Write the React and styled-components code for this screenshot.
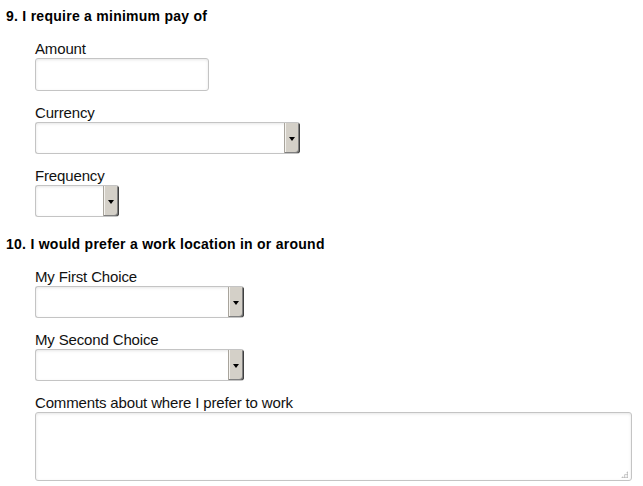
import React from "react";
import styled, { createGlobalStyle } from "styled-components";

const Global = createGlobalStyle`
  html, body { margin: 0; padding: 0; background: #fff; }
  body { font-family: "Liberation Sans", Arial, sans-serif; color: #000; }
`;

const Page = styled.form`
  padding: 8px 0 0 6px;
  width: 643px;
  box-sizing: border-box;
  display: flex;
  flex-direction: column;
  gap: 19px;
`;

const Section = styled.section``;

const Heading = styled.h2`
  margin: 0 0 15px;
  font-size: 14px;
  line-height: 17px;
  font-weight: bold;
  letter-spacing: 0.26px;
`;

const Fields = styled.div`
  padding-left: 29px;
  display: flex;
  flex-direction: column;
  gap: 13px;
`;

const Field = styled.div`
  display: flex;
  flex-direction: column;
  align-items: flex-start;
`;

const Label = styled.label`
  display: block;
  font-size: 15px;
  line-height: 18px;
  letter-spacing: -0.15px;
  color: #111;
`;

const TextInput = styled.input`
  box-sizing: border-box;
  width: 174px;
  height: 33px;
  margin: 0;
  border: 1px solid #c4c4c4;
  border-radius: 3px;
  box-shadow: inset 0 1px 3px rgba(0, 0, 0, 0.1);
  background: #fff;
  outline: none;
  padding: 0 4px;
  font: inherit;
`;

const SelectBox = styled.div`
  box-sizing: border-box;
  width: ${(p) => p.$w}px;
  height: 32px;
  display: flex;
  border: 1px solid #c4c4c4;
  border-right: none;
  border-radius: 3px;
  box-shadow: inset 0 1px 3px rgba(0, 0, 0, 0.1);
  background: #fff;
  overflow: hidden;
`;

const NativeSelect = styled.select`
  flex: 1;
  min-width: 0;
  appearance: none;
  -webkit-appearance: none;
  border: none;
  background: transparent;
  outline: none;
  margin: 0;
  padding: 0 4px;
  font: inherit;
`;

const DropButton = styled.span`
  box-sizing: border-box;
  width: 16px;
  margin: -1px 0;
  display: flex;
  align-items: center;
  justify-content: center;
  background: #d4d0c8;
  border-left: 1px solid #a8a49c;
  box-shadow: inset -1px -1px 0 #404040, inset -2px -2px 0 #808080,
    inset 1px 1px 0 #f4f2ee;
  border-radius: 0 3px 3px 0;
`;

const Arrow = styled.span`
  width: 0;
  height: 0;
  margin: 2px 1px 0 0;
  border-left: 3.5px solid transparent;
  border-right: 3.5px solid transparent;
  border-top: 4px solid #000;
`;

const AreaWrap = styled.div`
  position: relative;
  width: 597px;
  height: 69px;
  &::after {
    content: "";
    position: absolute;
    right: 4px;
    bottom: 3px;
    width: 7px;
    height: 7px;
    background:
      radial-gradient(circle, #b0b0b0 0.8px, transparent 1px) 0 0 / 2.5px 2.5px;
    clip-path: polygon(100% 0, 100% 100%, 0 100%);
    pointer-events: none;
  }
`;

const TextArea = styled.textarea`
  box-sizing: border-box;
  display: block;
  width: 100%;
  height: 100%;
  margin: 0;
  resize: none;
  border: 1px solid #c4c4c4;
  border-radius: 3px;
  box-shadow: inset 0 1px 3px rgba(0, 0, 0, 0.1);
  background: #fff;
  outline: none;
  font: inherit;
`;

const Select = ({ id, width }) => (
  <SelectBox $w={width}>
    <NativeSelect id={id} defaultValue="">
      <option value=""></option>
    </NativeSelect>
    <DropButton>
      <Arrow />
    </DropButton>
  </SelectBox>
);

export default function App() {
  return (
    <>
      <Global />
      <Page>
        <Section>
          <Heading>9. I require a minimum pay of</Heading>
          <Fields>
            <Field>
              <Label htmlFor="amount">Amount</Label>
              <TextInput id="amount" type="text" />
            </Field>
            <Field>
              <Label htmlFor="currency">Currency</Label>
              <Select id="currency" width={265} />
            </Field>
            <Field>
              <Label htmlFor="frequency">Frequency</Label>
              <Select id="frequency" width={84} />
            </Field>
          </Fields>
        </Section>
        <Section>
          <Heading>10. I would prefer a work location in or around</Heading>
          <Fields>
            <Field>
              <Label htmlFor="first">My First Choice</Label>
              <Select id="first" width={209} />
            </Field>
            <Field>
              <Label htmlFor="second">My Second Choice</Label>
              <Select id="second" width={209} />
            </Field>
            <Field>
              <Label htmlFor="comments">Comments about where I prefer to work</Label>
              <AreaWrap>
                <TextArea id="comments" />
              </AreaWrap>
            </Field>
          </Fields>
        </Section>
      </Page>
    </>
  );
}
